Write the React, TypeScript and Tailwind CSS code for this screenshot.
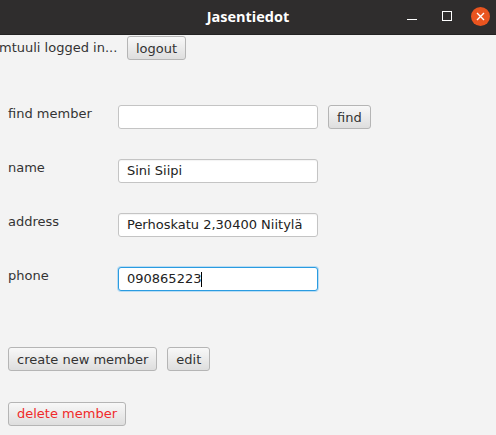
import React from "react";

const font = { fontFamily: '"DejaVu Sans", "Liberation Sans", sans-serif' };

function Btn({ children, red, className = "" }: { children: React.ReactNode; red?: boolean; className?: string }) {
  return (
    <button
      className={`h-[24px] px-[8px] rounded-[3px] border border-[#b5b5b5] bg-gradient-to-b from-[#f8f8f8] to-[#dedede] text-[13px] leading-none ${red ? "text-[#f02a2a]" : "text-[#333333]"} ${className}`}
    >
      {children}
    </button>
  );
}

function Field({ label, value, focused, top }: { label: string; value: string; focused?: boolean; top: string }) {
  return (
    <div className={`flex items-start ${top}`}>
      <div className="w-[118px] pl-[8px] pt-[1px] text-[13px] leading-[16px] text-[#333333]">{label}</div>
      <div
        className={`w-[200px] h-[24px] rounded-[3px] bg-white flex items-center pl-[8px] text-[13px] text-[#222222] ${
          focused
            ? "border border-[#2a9be0] shadow-[0_0_0_1px_#b9dcf3]"
            : "border border-[#c4c4c4] shadow-[inset_0_1px_1px_rgba(0,0,0,0.05)]"
        }`}
      >
        {value}
        {focused && <span className="inline-block w-[1px] h-[15px] bg-black" />}
      </div>
    </div>
  );
}

export default function App() {
  return (
    <div className="w-[496px] h-[435px] bg-[#f3f3f3] overflow-hidden" style={font}>
      <div className="h-[35px] bg-[#2f2d2d] border-b border-[#232222] relative flex items-center justify-center">
        <span className="text-white font-bold text-[14.5px]" style={{ fontFamily: '"Open Sans", "DejaVu Sans", sans-serif' }}>
          Jasentiedot
        </span>
        <div className="absolute left-[407px] top-[19px] w-[10px] h-[1px] bg-white" />
        <div className="absolute left-[442px] top-[11px] w-[10px] h-[10px] border border-white" />
        <div className="absolute left-[471px] top-[7px] w-[19px] h-[19px] rounded-full bg-[#e9541f] flex items-center justify-center">
          <svg width="9" height="9" viewBox="0 0 9 9">
            <path d="M1 1L8 8M8 1L1 8" stroke="white" strokeWidth="1.4" />
          </svg>
        </div>
      </div>

      <div className="flex items-center mt-[1px] h-[24px]">
        <div className="w-[128px] ml-[-1px] text-[13px] text-[#333333]">mtuuli logged in...</div>
        <Btn>logout</Btn>
      </div>

      <div className="flex items-start mt-[45px]">
        <div className="w-[118px] pl-[8px] pt-[1px] text-[13px] leading-[16px] text-[#333333]">find member</div>
        <div className="w-[200px] h-[24px] rounded-[3px] bg-white border border-[#c4c4c4]" />
        <Btn className="ml-[10px]">find</Btn>
      </div>

      <Field label="name" value="Sini Siipi" top="mt-[30px]" />
      <Field label="address" value="Perhoskatu 2,30400 Niitylä" top="mt-[30px]" />
      <Field label="phone" value="090865223" focused top="mt-[30px]" />

      <div className="flex items-center gap-[10px] pl-[8px] mt-[56px]">
        <Btn>create new member</Btn>
        <Btn>edit</Btn>
      </div>
      <div className="pl-[8px] mt-[30px]">
        <Btn red>delete member</Btn>
      </div>
    </div>
  );
}
